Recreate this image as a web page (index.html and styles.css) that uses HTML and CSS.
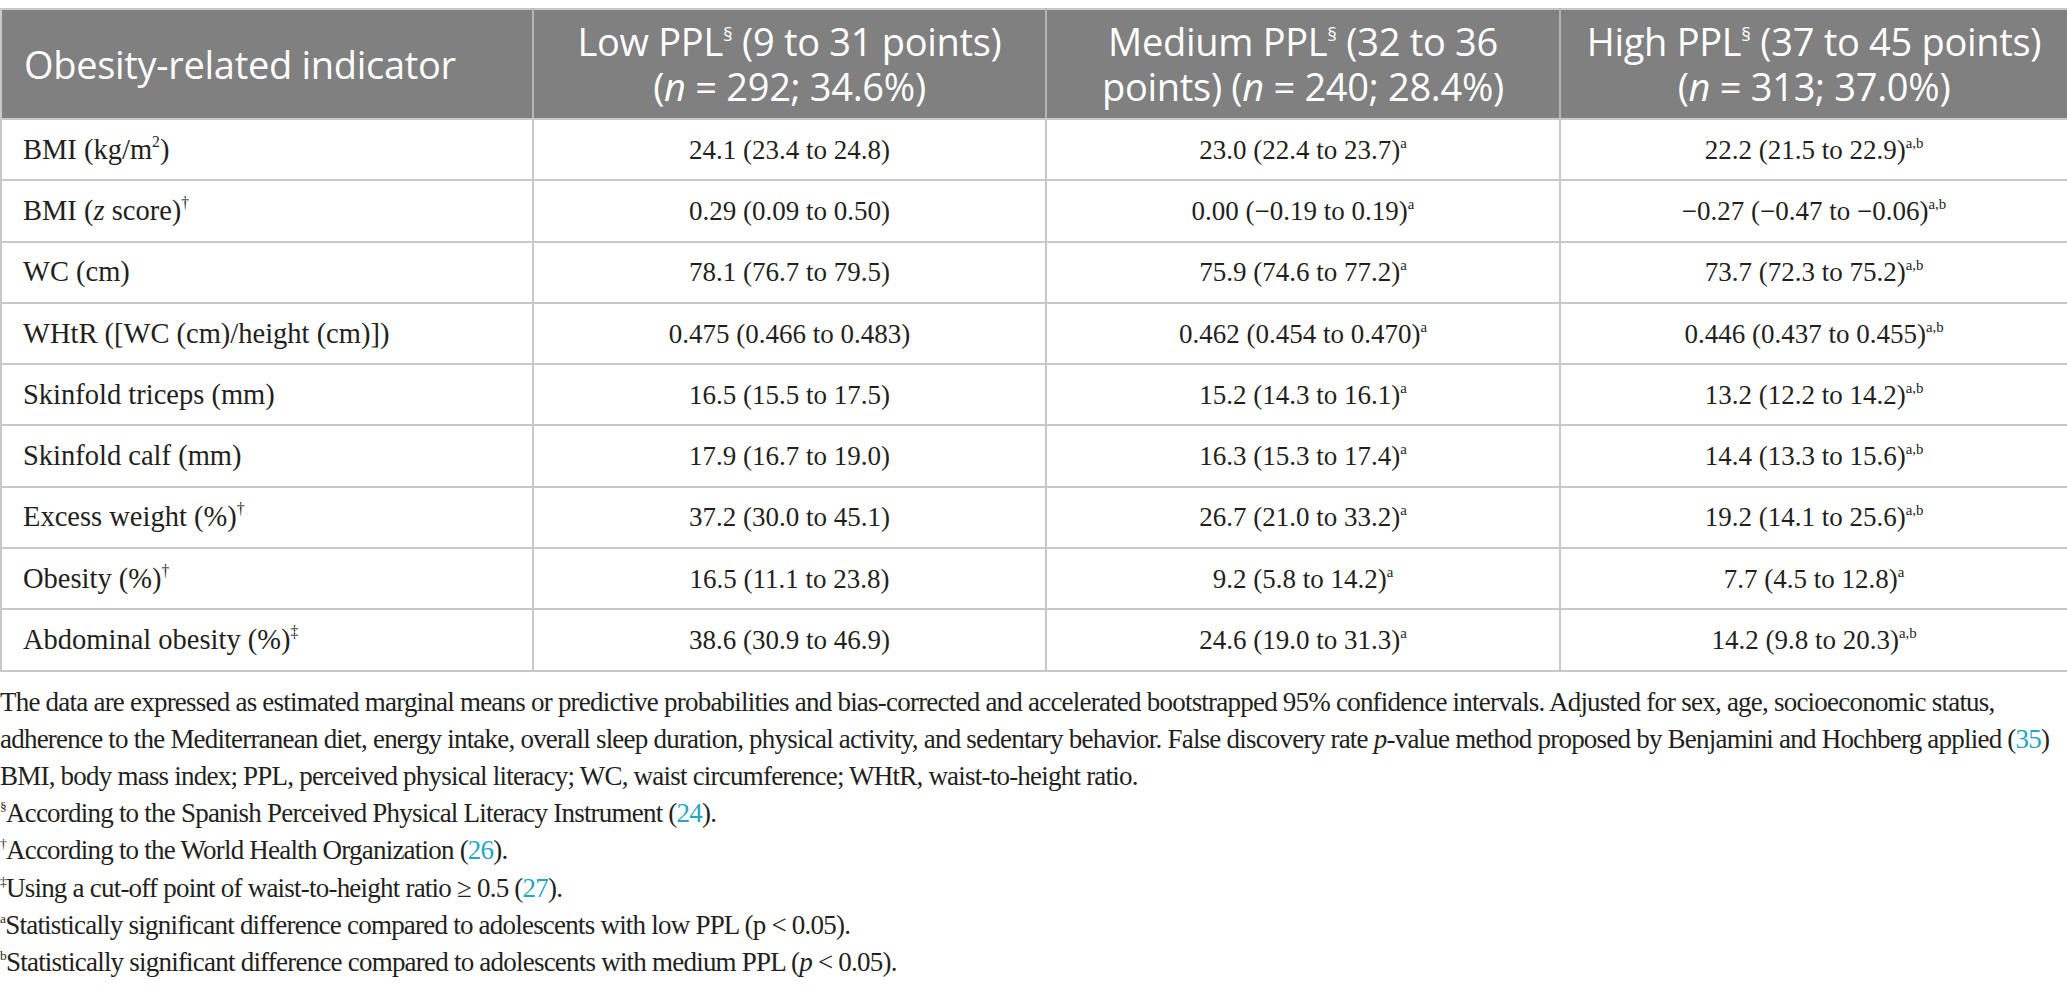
FILE: index.html
```html
<!DOCTYPE html>
<html lang="en">
<head>
<meta charset="utf-8">
<title>Table</title>
<link rel="stylesheet" href="styles.css">
</head>
<body>
<table class="data">
  <colgroup>
    <col class="c1"><col class="c2"><col class="c3"><col class="c4">
  </colgroup>
  <thead>
    <tr>
      <th class="first">Obesity-related indicator</th>
      <th>Low PPL<sup>§</sup> (9 to 31 points)<br>(<i>n</i> = 292; 34.6%)</th>
      <th>Medium PPL<sup>§</sup> (32 to 36<br>points) (<i>n</i> = 240; 28.4%)</th>
      <th>High PPL<sup>§</sup> (37 to 45 points)<br>(<i>n</i> = 313; 37.0%)</th>
    </tr>
  </thead>
  <tbody>
    <tr><td class="first">BMI (kg/m<sup>2</sup>)</td><td>24.1 (23.4 to 24.8)</td><td>23.0 (22.4 to 23.7)<sup>a</sup></td><td>22.2 (21.5 to 22.9)<sup>a,b</sup></td></tr>
    <tr><td class="first">BMI (<i>z</i> score)<sup>†</sup></td><td>0.29 (0.09 to 0.50)</td><td>0.00 (−0.19 to 0.19)<sup>a</sup></td><td>−0.27 (−0.47 to −0.06)<sup>a,b</sup></td></tr>
    <tr><td class="first">WC (cm)</td><td>78.1 (76.7 to 79.5)</td><td>75.9 (74.6 to 77.2)<sup>a</sup></td><td>73.7 (72.3 to 75.2)<sup>a,b</sup></td></tr>
    <tr><td class="first">WHtR ([WC (cm)/height (cm)])</td><td>0.475 (0.466 to 0.483)</td><td>0.462 (0.454 to 0.470)<sup>a</sup></td><td>0.446 (0.437 to 0.455)<sup>a,b</sup></td></tr>
    <tr><td class="first">Skinfold triceps (mm)</td><td>16.5 (15.5 to 17.5)</td><td>15.2 (14.3 to 16.1)<sup>a</sup></td><td>13.2 (12.2 to 14.2)<sup>a,b</sup></td></tr>
    <tr><td class="first">Skinfold calf (mm)</td><td>17.9 (16.7 to 19.0)</td><td>16.3 (15.3 to 17.4)<sup>a</sup></td><td>14.4 (13.3 to 15.6)<sup>a,b</sup></td></tr>
    <tr><td class="first">Excess weight (%)<sup>†</sup></td><td>37.2 (30.0 to 45.1)</td><td>26.7 (21.0 to 33.2)<sup>a</sup></td><td>19.2 (14.1 to 25.6)<sup>a,b</sup></td></tr>
    <tr><td class="first">Obesity (%)<sup>†</sup></td><td>16.5 (11.1 to 23.8)</td><td>9.2 (5.8 to 14.2)<sup>a</sup></td><td>7.7 (4.5 to 12.8)<sup>a</sup></td></tr>
    <tr><td class="first">Abdominal obesity (%)<sup>‡</sup></td><td>38.6 (30.9 to 46.9)</td><td>24.6 (19.0 to 31.3)<sup>a</sup></td><td>14.2 (9.8 to 20.3)<sup>a,b</sup></td></tr>
  </tbody>
</table>
<div class="notes">
  <p class="line">The data are expressed as estimated marginal means or predictive probabilities and bias-corrected and accelerated bootstrapped 95% confidence intervals. Adjusted for sex, age, socioeconomic status,</p>
  <p class="line">adherence to the Mediterranean diet, energy intake, overall sleep duration, physical activity, and sedentary behavior. False discovery rate <i>p</i>-value method proposed by Benjamini and Hochberg applied (<a class="ref" href="#r35">35</a>)</p>
  <p class="line">BMI, body mass index; PPL, perceived physical literacy; WC, waist circumference; WHtR, waist-to-height ratio.</p>
  <p class="line"><sup>§</sup>According to the Spanish Perceived Physical Literacy Instrument (<a class="ref" href="#r24">24</a>).</p>
  <p class="line"><sup>†</sup>According to the World Health Organization (<a class="ref" href="#r26">26</a>).</p>
  <p class="line"><sup>‡</sup>Using a cut-off point of waist-to-height ratio ≥ 0.5 (<a class="ref" href="#r27">27</a>).</p>
  <p class="line"><sup>a</sup>Statistically significant difference compared to adolescents with low PPL (p &lt; 0.05).</p>
  <p class="line"><sup>b</sup>Statistically significant difference compared to adolescents with medium PPL (<i>p</i> &lt; 0.05).</p>
</div>
</body>
</html>
```

FILE: styles.css
```css
html, body {
  margin: 0;
  padding: 0;
  background: #ffffff;
}
body {
  padding-top: 8px;
  font-family: "Liberation Serif", "Times New Roman", serif;
  color: #231f20;
}
.data {
  width: 2067px;
  border-collapse: collapse;
  table-layout: fixed;
  border: 2px solid #c8c8c8;
}
.c1 { width: 532px; }
.c2 { width: 513px; }
.c3 { width: 514px; }
.c4 { width: 508px; }

.data th {
  background: #7f807f;
  color: #ffffff;
  font-family: "Open Sans", "Noto Sans", sans-serif;
  font-weight: 400;
  font-size: 38px;
  letter-spacing: -0.3px;
  line-height: 45px;
  height: 108px;
  padding: 0 8px;
  text-align: center;
  vertical-align: middle;
  white-space: nowrap;
  border-left: 2px solid #b5b5b5;
  border-bottom: 2px solid #c8c8c8;
}
.data th.first {
  text-align: left;
  padding-left: 22px;
  border-left: none;
}
.data th sup {
  font-size: 0.5em;
  vertical-align: 0.8em;
  line-height: 0;
}
.data td {
  font-size: 27px;
  line-height: 30px;
  height: 59.3px;
  padding: 0 12px;
  text-align: center;
  vertical-align: middle;
  white-space: nowrap;
  border: 2px solid #c8c8c8;
}
.data td.first {
  text-align: left;
  padding-left: 21px;
  font-size: 28.5px;
}
.data td sup {
  font-size: 0.55em;
  vertical-align: 0.75em;
  line-height: 0;
}
.notes {
  padding-top: 12px;
}
.notes .line {
  margin: 0;
  font-size: 27px;
  letter-spacing: -0.78px;
  line-height: 37.2px;
  white-space: nowrap;
}
.notes sup {
  font-size: 0.5em;
  vertical-align: 0.8em;
  line-height: 0;
}
.ref {
  color: #1fa8c0;
  text-decoration: none;
}
```
